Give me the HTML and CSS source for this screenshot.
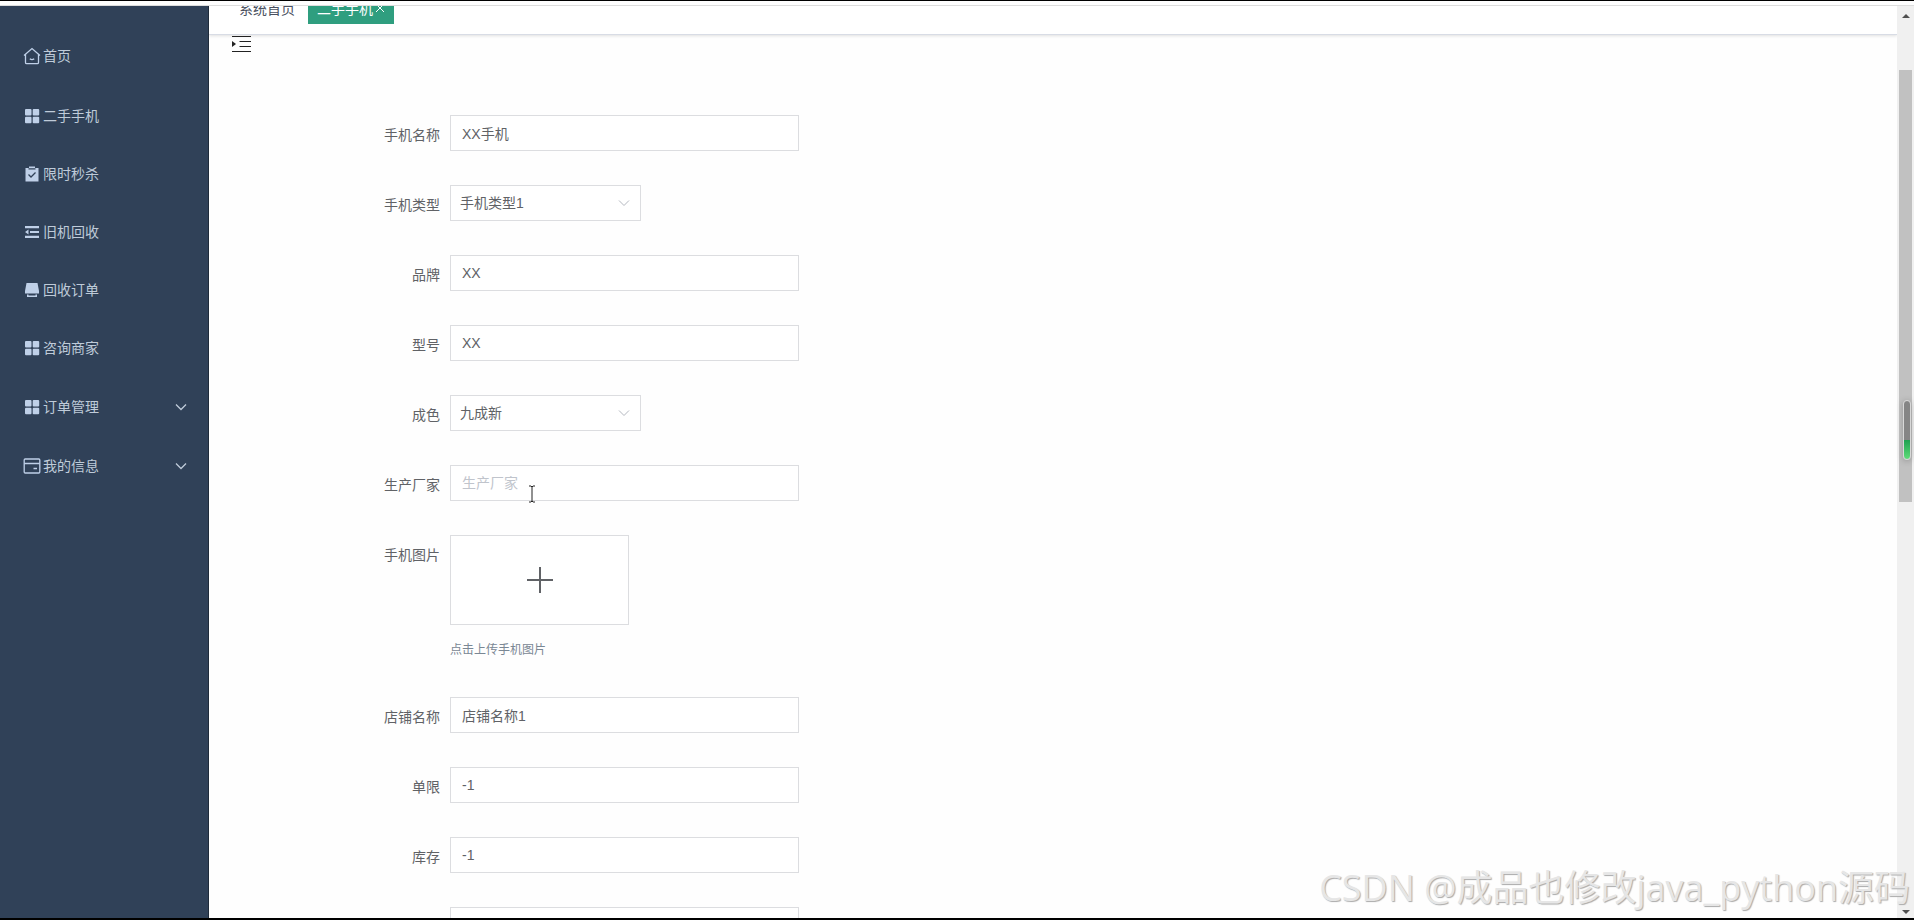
FILE: index.html
```html
<!DOCTYPE html>
<html lang="zh-CN">
<head>
  <meta charset="UTF-8" />
  <title>二手手机</title>
  <link rel="stylesheet" href="styles.css">
</head>
<body>

  <div class="app">
    <nav class="sidebar">
      <a href="#" class="menu-item home">
        <svg class="icon" viewBox="0 0 18 18"><path d="M1 8.500 9 1.500l8 7M2.500 7.500v8q0 1.200 1.200 1.200h10.600q1.200 0 1.200-1.200v-8M6.800 11.800q2.200 1.700 4.400 0" /></svg>
        <span>首页</span>
      </a>
      <a href="#" class="menu-item">
        <svg class="icon solid" viewBox="0 0 18 18"><rect x="2" y="2" width="6.500" height="6.500" rx="1" /><rect x="9.700" y="2" width="6.500" height="6.500" rx="1" /><rect x="2" y="9.700" width="6.500" height="6.500" rx="1" /><rect x="9.700" y="9.700" width="6.500" height="6.500" rx="1" /></svg>
        <span>二手手机</span>
      </a>
      <a href="#" class="menu-item">
        <svg class="icon solid" viewBox="0 0 18 18"><path d="M2.500 3H6V1.500h6V3h3.500v13.500h-13z" /><path class="cut" d="M5.500 9.500 8 12l4.500-4.500M5.500 3.800h7" /></svg>
        <span>限时秒杀</span>
      </a>
      <a href="#" class="menu-item">
        <svg class="icon solid" viewBox="0 0 18 18"><path d="M2 3h14v2.200H2zM7 7.900h9v2.200H7zM2 12.800h14V15H2zM2 9l3.500-2.500v5z" /></svg>
        <span>旧机回收</span>
      </a>
      <a href="#" class="menu-item">
        <svg class="icon solid" viewBox="0 0 18 18"><path d="M3.500 2h11l1.500 8v2.500H2V10zM4 13.500h1.500v1h7v-1H14V16H4z" /></svg>
        <span>回收订单</span>
      </a>
      <a href="#" class="menu-item">
        <svg class="icon solid" viewBox="0 0 18 18"><rect x="2" y="2" width="6.500" height="6.500" rx="1" /><rect x="9.700" y="2" width="6.500" height="6.500" rx="1" /><rect x="2" y="9.700" width="6.500" height="6.500" rx="1" /><rect x="9.700" y="9.700" width="6.500" height="6.500" rx="1" /></svg>
        <span>咨询商家</span>
      </a>
      <a href="#" class="menu-item submenu">
        <svg class="icon solid" viewBox="0 0 18 18"><rect x="2" y="2" width="6.500" height="6.500" rx="1" /><rect x="9.700" y="2" width="6.500" height="6.500" rx="1" /><rect x="2" y="9.700" width="6.500" height="6.500" rx="1" /><rect x="9.700" y="9.700" width="6.500" height="6.500" rx="1" /></svg>
        <span>订单管理</span>
        <svg class="arrow" viewBox="0 0 12 12"><path d="M1 3.500 6 8.500l5-5" /></svg>
      </a>
      <a href="#" class="menu-item submenu">
        <svg class="icon" viewBox="0 0 18 18"><rect x="1.200" y="2" width="15.600" height="14" rx="1" /><path d="M1.200 6.500h15.600M10.500 11.500h3.500" /></svg>
        <span>我的信息</span>
        <svg class="arrow" viewBox="0 0 12 12"><path d="M1 3.500 6 8.500l5-5" /></svg>
      </a>
    </nav>

    <main class="main">
      <div class="tabs">
        <a href="#" class="tab">系统首页</a>
        <a href="#" class="tab active">二手手机<svg class="close" viewBox="0 0 10 10"><path d="M1 1l8 8M9 1 1 9" /></svg></a>
      </div>
      <button class="fold" aria-label="折叠菜单">
        <svg viewBox="0 0 20 18"><path d="M0 1.500h19M7.500 6.500H19M7.500 11.500H19M0 16.500h19" /><path class="tri" d="M0 6v6l4-3z" /></svg>
      </button>

      <form class="form">
        <div class="form-item">
          <label for="name">手机名称</label>
          <input type="text" id="name" value="XX手机" />
        </div>
        <div class="form-item">
          <label for="type">手机类型</label>
          <div class="select">
            <select id="type"><option>手机类型1</option></select>
            <svg class="arrow" viewBox="0 0 12 12"><path d="M1 3.500 6 8.500l5-5" /></svg>
          </div>
        </div>
        <div class="form-item">
          <label for="brand">品牌</label>
          <input type="text" id="brand" value="XX" />
        </div>
        <div class="form-item">
          <label for="model">型号</label>
          <input type="text" id="model" value="XX" />
        </div>
        <div class="form-item">
          <label for="quality">成色</label>
          <div class="select">
            <select id="quality"><option>九成新</option></select>
            <svg class="arrow" viewBox="0 0 12 12"><path d="M1 3.500 6 8.500l5-5" /></svg>
          </div>
        </div>
        <div class="form-item">
          <label for="maker">生产厂家</label>
          <input type="text" id="maker" placeholder="生产厂家" />
        </div>
        <div class="form-item">
          <label for="photo">手机图片</label>
          <div>
            <button type="button" class="upload" id="photo">
              <svg viewBox="0 0 26 26"><path d="M13 0v26M0 13h26" /></svg>
            </button>
            <p class="tip">点击上传手机图片</p>
          </div>
        </div>
        <div class="form-item">
          <label for="shop">店铺名称</label>
          <input type="text" id="shop" value="店铺名称1" />
        </div>
        <div class="form-item">
          <label for="limit">单限</label>
          <input type="text" id="limit" value="-1" />
        </div>
        <div class="form-item">
          <label for="stock">库存</label>
          <input type="text" id="stock" value="-1" />
        </div>
        <div class="form-item">
          <label for="extra"></label>
          <input type="text" id="extra" />
        </div>
      </form>
    </main>

    <div class="scrollbar">
      <svg class="scroll-arrow" viewBox="0 0 8 4"><path d="M4 0l4 4H0z" /></svg>
      <div class="thumb"></div>
      <svg class="scroll-arrow" viewBox="0 0 8 4"><path d="M0 0h8L4 4z" /></svg>
    </div>
  </div>

  <div class="meter"></div>
  <svg class="cursor" viewBox="0 0 8 18"><path d="M1 1h2l1 1 1-1h2M4 2v14M1 17h2l1-1 1 1h2" /></svg>
  <div class="watermark">CSDN @成品也修改java_python源码</div>

</body>
</html>
```
FILE: styles.css
```css
* {
  box-sizing: border-box;
}

body {
  margin: 0;
  height: 100vh;
  overflow: hidden;
  position: relative;
  display: flex;
  flex-direction: column;
  font-family: "Liberation Sans", "Noto Sans CJK SC", sans-serif;
  font-size: 14px;
  color: #606266;
  background: #fefefe;
  border-top: 1px solid #000;
  border-bottom: 2px solid #000;
}

a {
  text-decoration: none;
  color: inherit;
}

svg {
  fill: none;
  stroke: currentColor;
  flex-shrink: 0;
}

.app {
  flex: 1;
  min-height: 0;
  display: flex;
  margin-top: 4px;
  border-top: 1px solid #ddd;
}

/* sidebar */
.sidebar {
  width: 209px;
  flex-shrink: 0;
  padding-top: 21px;
  background: #304158;
  border-right: 1px solid #1f2b3a;
}

.menu-item {
  display: flex;
  align-items: center;
  height: 58px;
  padding: 0 21px 0 23px;
  color: #bfcbd9;
}

.menu-item span {
  padding-bottom: 2px;
}

.menu-item.home {
  margin-bottom: 2px;
}

.menu-item.submenu {
  height: 59px;
}

.icon {
  width: 18px;
  height: 18px;
  margin-right: 2px;
  stroke-width: 1.3;
  color: #bfd0e8;
}

.icon.solid {
  fill: currentColor;
  stroke: none;
}

.icon .cut {
  fill: none;
  stroke: #304158;
}

.arrow {
  width: 12px;
  height: 12px;
}

.menu-item .arrow {
  margin-left: auto;
  stroke-width: 1.3;
}

/* main */
.main {
  flex: 1;
  min-width: 0;
  overflow: hidden;
}

.tabs {
  display: flex;
  align-items: flex-end;
  gap: 4px;
  height: 29px;
  padding: 0 21px 10px;
  overflow: hidden;
  background: #fff;
  border-bottom: 1px solid #d8dce5;
  box-shadow: 0 1px 3px rgba(0,0,0,0.12);
}

.tab {
  display: flex;
  align-items: center;
  height: 30px;
  padding: 0 9px 2px;
  color: #495060;
}

.tab.active {
  background: #2f9e7f;
  color: #fff;
}

.close {
  width: 10px;
  height: 10px;
  margin-left: 2px;
}

.fold {
  display: block;
  width: 20px;
  height: 18px;
  margin-left: 23px;
  padding: 0;
  border: none;
  background: none;
  color: #222;
}

.fold svg {
  display: block;
}

.fold .tri {
  fill: currentColor;
  stroke: none;
}

/* form */
.form {
  padding-top: 62px;
}

.form-item {
  display: flex;
  align-items: flex-start;
  margin-bottom: 34px;
}

.form-item label {
  width: 231px;
  margin-right: 10px;
  line-height: 40px;
  height: 36px;
  text-align: right;
}

input, select {
  height: 36px;
  border: 1px solid #dcdde0;
  border-radius: 0;
  background: #fff;
  color: #606266;
  font: inherit;
  outline: none;
}

input {
  width: 349px;
  padding: 0 11px;
}

input::placeholder {
  color: #c0c4cc;
}

.select {
  position: relative;
}

select {
  width: 191px;
  padding: 0 9px;
  appearance: none;
}

.select .arrow {
  position: absolute;
  right: 11px;
  top: 12px;
  color: #b4b8c0;
  pointer-events: none;
}

.upload {
  display: flex;
  align-items: center;
  justify-content: center;
  width: 179px;
  height: 90px;
  border: 1px solid #dcdde0;
  background: #fff;
  color: #606266;
}

.upload svg {
  width: 26px;
  height: 26px;
  stroke-width: 2;
}

.tip {
  margin: 15px 0 3px;
  font-size: 12px;
  line-height: 20px;
  color: #7a8794;
}

/* scrollbar */
.scrollbar {
  width: 17px;
  flex-shrink: 0;
  display: flex;
  flex-direction: column;
  align-items: center;
  padding: 8px 0 4px;
  background: #f0f0f0;
}

.scroll-arrow {
  width: 8px;
  height: 4px;
  fill: #505050;
  stroke: none;
}

.thumb {
  width: 13px;
  height: 48%;
  margin: 52px 0 auto;
  background: #c1c1c1;
}

/* overlays */
.meter {
  position: absolute;
  right: 3px;
  top: 399px;
  width: 8px;
  height: 60px;
  border: 1px solid #d8d8d8;
  border-radius: 4px;
  background: linear-gradient(#858585 67%, #1fa050 67%, #5fdc78);
  box-shadow: 0 1px 6px rgba(0,0,0,0.25);
}

.cursor {
  position: absolute;
  left: 528px;
  top: 484px;
  width: 8px;
  height: 18px;
  color: #222;
}

.watermark {
  position: absolute;
  right: 4px;
  bottom: 5px;
  font-family: "Open Sans", "Noto Sans CJK SC", sans-serif;
  font-size: 36px;
  line-height: 50px;
  color: #e6e6e6;
  text-shadow: 1px 1px 1px #aaa;
  white-space: nowrap;
}
```
